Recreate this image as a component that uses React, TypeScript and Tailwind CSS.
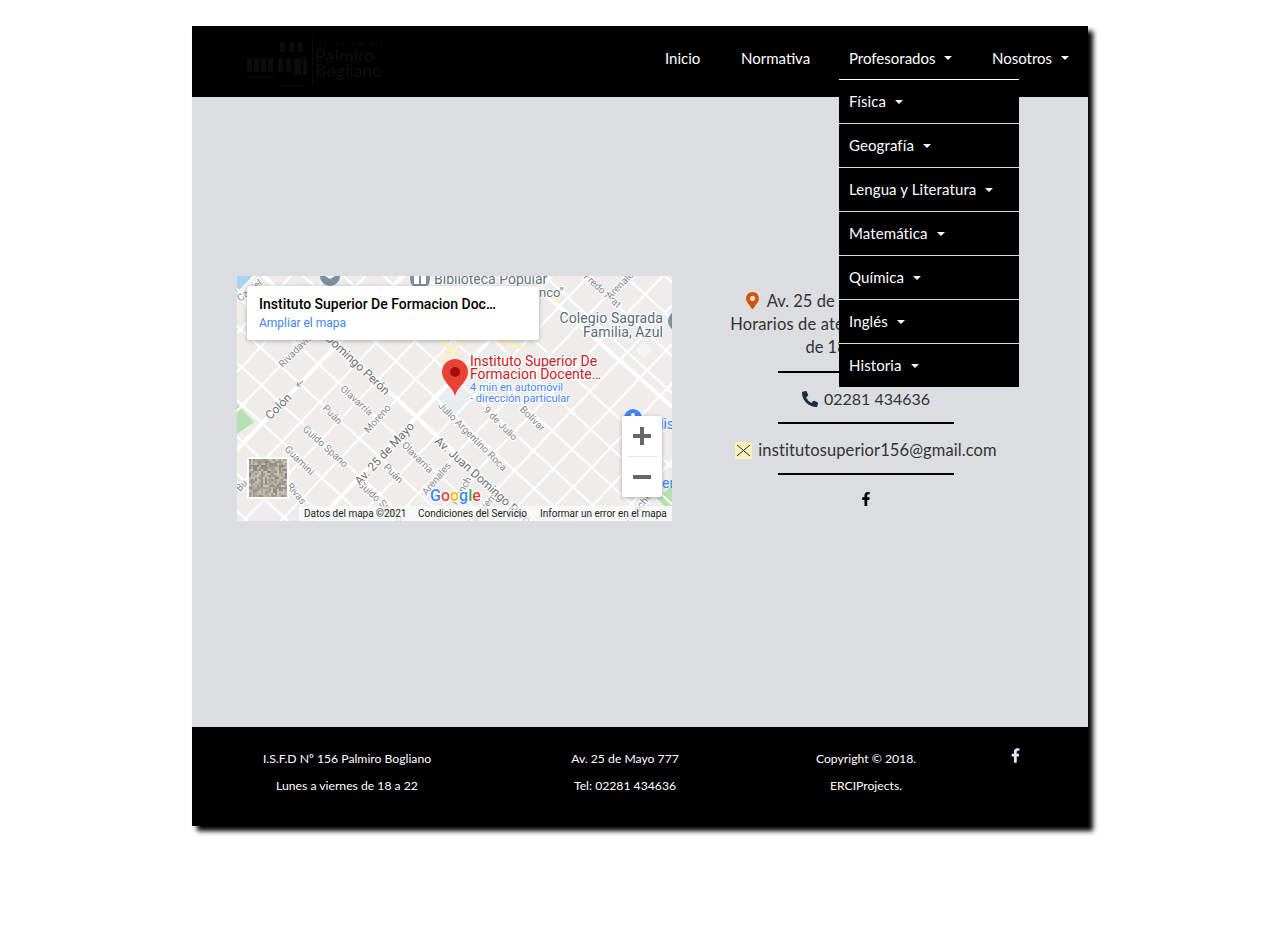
import { FaFacebookF, FaMapMarkerAlt, FaPhoneAlt } from 'react-icons/fa';

const professorados = ['Física', 'Geografía', 'Lengua y Literatura', 'Matemática', 'Química', 'Inglés', 'Historia'];

// street families of the map: y = 0.92x + c and y = -1.05x + d
const downRight = [-468, -431, -394, -357, -320, -283, -209, -172, -135, -98, -61, 13, 50, 87, 124, 161, 198, 235];
const upRight = [18, 57, 96, 135, 213, 252, 291, 369, 408, 447, 486, 525, 564, 603, 642];

const labels: [number, number, number, string, number][] = [
  [13, 15, -38, 'Catriel', 10],
  [59, 75, -45, 'Rivadavia', 10],
  [42, 131, -45, 'Colón', 12],
  [119, 125, 42, 'Olavarría', 10],
  [95, 139, 45, 'Puán', 10],
  [141, 143, -48, 'Moreno', 10],
  [88, 171, 42, 'Guido Spano', 10],
  [62, 185, 45, 'Guamini', 10],
  [59, 218, 50, 'Rivas', 10],
  [5, 210, -45, 'Bu', 10],
  [180, 182, 45, 'Olavarría', 10],
  [156, 198, 45, 'Puán', 10],
  [143, 226, 42, 'Guido Spano', 10],
  [200, 203, -50, 'Arenales', 10],
  [235, 161, 45, 'Julio Argentino Roca', 10],
  [263, 148, 45, '9 de Julio', 10],
  [295, 143, 45, 'Bolívar', 10],
  [225, 215, -60, 'French', 10],
  [247, 232, -50, 'Sarmiento', 10],
  [365, 15, 42, 'Fredo Prat', 10],
  [385, 8, -45, 'Arenales', 10],
  [402, 232, -50, 'Necochea', 10],
];

// speckle for the satellite thumbnail, same every render
const speckle = Array.from({ length: 19 * 19 }, (_, i) => {
  const n = Math.sin(i * 12.9898) * 43758.5453;
  const v = n - Math.floor(n);
  const g = Math.round(128 + v * 70);
  return { x: 12 + (i % 19) * 2, y: 183 + Math.floor(i / 19) * 2, fill: `rgb(${g + 6},${g + 2},${g - 10})` };
});

function Caret() {
  return <span className="ml-[9px] inline-block h-0 w-0 border-x-[4.5px] border-t-[4.5px] border-x-transparent border-t-white" />;
}

function Logo() {
  return (
    <svg width="140" height="60" viewBox="0 0 140 60" className="mt-[6px] font-['Lato',sans-serif]">
      <g fill="#0c0c0c">
        <rect x="2" y="26" width="5" height="14" />
        <rect x="9" y="26" width="5" height="14" />
        <rect x="16" y="26" width="5" height="14" />
        <rect x="23" y="26" width="5" height="14" />
        <rect x="2" y="44" width="28" height="1" />
        <rect x="35" y="10" width="5" height="10" />
        <rect x="44" y="10" width="5" height="10" />
        <rect x="53" y="10" width="5" height="10" />
        <rect x="33" y="26" width="5" height="14" />
        <rect x="41" y="26" width="5" height="14" />
        <rect x="49" y="26" width="7" height="17" />
        <rect x="58" y="26" width="4" height="17" />
        <rect x="37" y="53" width="23" height="1" />
        <rect x="67" y="5" width="1" height="47" />
      </g>
      <g fill="#0f0f0f">
        <text x="70" y="14" fontSize="6.5" letterSpacing="0.8">INSTITUTO Nº 156</text>
        <text x="70" y="30" fontSize="18">Palmiro</text>
        <text x="70" y="45" fontSize="17.5">Bogliano</text>
      </g>
    </svg>
  );
}

function MapLabel({ x, y, r, text, size }: { x: number; y: number; r: number; text: string; size: number }) {
  return (
    <text
      x={x}
      y={y}
      transform={`rotate(${r} ${x} ${y})`}
      textAnchor="middle"
      dominantBaseline="middle"
      fontSize={size}
      fill={size > 10 ? '#6b6f73' : '#85888c'}
      stroke="#ffffff"
      strokeWidth="2"
      paintOrder="stroke"
    >
      {text}
    </text>
  );
}

function MapDrawing() {
  return (
    <svg width="435" height="245" viewBox="0 0 435 245" className="block font-['Roboto',sans-serif]">
      <rect width="435" height="245" fill="#eeedec" />
      <path d="M0 0h16L0 17z" fill="#a9d3f5" />
      <path d="M0 128l17 18-17 12z" fill="#b5e0b0" />
      <path d="M420 222l15-12v20h-8z" fill="#b5e0b0" />
      <path d="M203 116l22-7 8 17-18 12-12-8z" fill="#e9ecf1" />
      <g stroke="#ffffff" strokeWidth="2">
        {downRight.map((c) => (
          <line key={c} x1="-5" y1={-5 * 0.92 + c} x2="440" y2={440 * 0.92 + c} />
        ))}
        {upRight.map((d) => (
          <line key={d} x1="-5" y1={5 * 1.05 + d} x2="440" y2={-440 * 1.05 + d} />
        ))}
      </g>
      <g stroke="#ffffff" strokeWidth="4">
        <line x1="-5" y1="-29" x2="440" y2="381" />
        <line x1="-5" y1="179" x2="200" y2="-36" />
        <line x1="-5" y1="335" x2="330" y2="-17" />
        <line x1="310" y1="20" x2="440" y2="135" />
        <line x1="-5" y1="15" x2="40" y2="55" />
      </g>
      <g stroke="#fcefc4" strokeWidth="4">
        <line x1="205" y1="65" x2="222" y2="80" />
        <line x1="262" y1="65" x2="288" y2="72" />
        <line x1="225" y1="65" x2="203" y2="85" />
        <line x1="305" y1="15" x2="322" y2="25" />
      </g>
      <rect x="401" y="68" width="12" height="12" rx="2" transform="rotate(45 407 74)" fill="#f5f5f5" />

      {labels.map(([x, y, r, text, size]) => (
        <MapLabel key={`${text}-${x}`} x={x} y={y} r={r} text={text} size={size} />
      ))}
      <text x="120" y="89" transform="rotate(43 120 89)" textAnchor="middle" dominantBaseline="middle" fontSize="12" fill="#6b6f73" stroke="#fff" strokeWidth="2" paintOrder="stroke">Domingo Perón</text>
      <text x="148" y="178" transform="rotate(-47 148 178)" textAnchor="middle" dominantBaseline="middle" fontSize="12" fill="#6b6f73" stroke="#fff" strokeWidth="2" paintOrder="stroke">Av. 25 de Mayo</text>
      <text x="197" y="166" transform="rotate(42 197 166)" fontSize="12" fill="#6b6f73" stroke="#fff" strokeWidth="2" paintOrder="stroke">Av. Juan Domingo Perón</text>
      <path d="M66 105l-6 5m0 0l1-4m-1 4l4 0" stroke="#a0a0a0" strokeWidth="1.2" fill="none" />

      <circle cx="93" cy="0" r="10" fill="#7b909e" />
      <path d="M88 0l5 3 5-3v-4H88z" fill="#fff" />
      <circle cx="183" cy="3" r="10" fill="#7b909e" />
      <path d="M177-3h5v11h-5zM184-3h5v11h-5z" fill="#fff" />
      <text x="197" y="8" fontSize="14" fill="#5f7382" stroke="#fff" strokeWidth="2" paintOrder="stroke">Biblioteca Popular</text>
      <text x="302" y="21" fontSize="13" fill="#5f7382" stroke="#fff" strokeWidth="2" paintOrder="stroke">nco"</text>
      <g fontSize="14" fill="#566b7a" textAnchor="end" stroke="#fff" strokeWidth="2" paintOrder="stroke">
        <text x="426" y="47" letterSpacing="0.1">Colegio Sagrada</text>
        <text x="426" y="61" letterSpacing="0.1">Familia, Azul</text>
      </g>
      <circle cx="441" cy="45" r="10" fill="#7b909e" />

      <circle cx="396" cy="142" r="9" fill="#4285f4" />
      <circle cx="396" cy="139" r="2" fill="#fff" />
      <text x="423" y="153" fontSize="14" fill="#4285f4">lis</text>
      <text x="425" y="212" fontSize="14" fill="#4285f4">er</text>

      <path d="M218 120c-2-9-13-14-13-24a13 13 0 0 1 26 0c0 10-11 15-13 24z" fill="#ea4335" />
      <circle cx="218" cy="96" r="5" fill="#a50e0e" />
      <g stroke="#fff" strokeWidth="2" paintOrder="stroke">
        <text x="233" y="90" fontSize="14" fill="#c5221f">Instituto Superior De</text>
        <text x="233" y="103" fontSize="14" fill="#c5221f">Formacion Docente…</text>
        <text x="233" y="115" fontSize="11" fill="#4285f4">4 min en automóvil</text>
        <text x="233" y="126" fontSize="11" fill="#4285f4">- dirección particular</text>
      </g>

      <text x="193" y="225" fontSize="16" fontWeight="500" stroke="#fff" strokeWidth="2" paintOrder="stroke">
        <tspan fill="#4285f4">G</tspan>
        <tspan fill="#ea4335">o</tspan>
        <tspan fill="#fbbc05">o</tspan>
        <tspan fill="#4285f4">g</tspan>
        <tspan fill="#34a853">l</tspan>
        <tspan fill="#ea4335">e</tspan>
      </text>

      <rect x="10" y="181" width="42" height="42" rx="2" fill="#ffffff" />
      {speckle.map((s) => (
        <rect key={`${s.x}-${s.y}`} x={s.x} y={s.y} width="2" height="2" fill={s.fill} />
      ))}
    </svg>
  );
}

function GoogleMap() {
  return (
    <div className="relative h-[245px] w-[435px] shrink-0 overflow-hidden font-['Roboto',sans-serif]">
      <MapDrawing />
      <div className="absolute left-[10px] top-[10px] flex h-[54px] w-[292px] flex-col rounded-[2px] bg-white pl-[12px] pt-[9px] shadow-[0_1px_4px_rgba(0,0,0,0.3)]">
        <span className="text-[14px] font-medium leading-[18px] text-black">Instituto Superior De Formacion Doc…</span>
        <span className="mt-[1px] text-[12px] leading-[18px] text-[#4285f4]">Ampliar el mapa</span>
      </div>
      <div className="absolute left-[385px] top-[140px] flex h-[81px] w-[40px] flex-col items-center rounded-[2px] bg-white shadow-[0_1px_4px_rgba(0,0,0,0.3)]">
        <div className="relative h-[40px] w-full">
          <span className="absolute left-[11px] top-[18px] h-[4px] w-[18px] bg-[#666666]" />
          <span className="absolute left-[18px] top-[11px] h-[18px] w-[4px] bg-[#666666]" />
        </div>
        <div className="h-px w-[30px] bg-[#e6e6e6]" />
        <div className="relative h-[40px] w-full">
          <span className="absolute left-[11px] top-[18px] h-[4px] w-[18px] bg-[#666666]" />
        </div>
      </div>
      <div className="absolute bottom-0 left-[62px] right-0 flex h-[15px] items-center whitespace-nowrap bg-white/60 text-[10px] leading-[15px] text-[#222222]">
        <span className="ml-[5px] w-[114px]">Datos del mapa ©2021</span>
        <span className="w-[122px]">Condiciones del Servicio</span>
        <span>Informar un error en el mapa</span>
      </div>
    </div>
  );
}

function Rule() {
  return <div className="mx-auto h-[2px] w-[176px] bg-black" />;
}

export default function App() {
  return (
    <div className="min-h-screen bg-white pt-[26px] font-['Lato',sans-serif]">
      <div className="mx-auto w-[896px] shadow-[5px_5px_5px_#000000]">
        <header className="flex h-[71px] items-start justify-between bg-black pl-[53px] pr-[10px]">
          <Logo />
          <nav className="mt-[10px] flex h-[44px] items-center gap-[20px] whitespace-nowrap text-[15px] text-white">
            <a className="w-[56px] px-[10px]">Inicio</a>
            <a className="w-[88px] px-[10px]">Normativa</a>
            <div className="relative flex h-[44px] w-[123px] items-center px-[10px]">
              Profesorados
              <Caret />
              <ul className="absolute left-0 top-[43px] z-10 w-[180px] border-t border-white bg-black tracking-[0.1px]">
                {professorados.map((name, i) => (
                  <li key={name} className={`flex items-center px-[10px] ${i < professorados.length - 1 ? 'h-[44px] border-b border-[#dddddd]' : 'h-[43px]'}`}>
                    {name}
                    <Caret />
                  </li>
                ))}
              </ul>
            </div>
            <a className="flex w-[96px] items-center px-[10px]">
              Nosotros
              <Caret />
            </a>
          </nav>
        </header>

        <main className="flex h-[630px] items-start bg-[#dbdde0] pl-[45px] pr-[28px] pt-[179px]">
          <GoogleMap />
          <div className="flex-1 whitespace-nowrap pt-[14px] text-center text-[16.5px] leading-[23px] text-[#333333]">
            <p>
              <FaMapMarkerAlt className="mr-[8px] inline-block h-[17px] w-[13px] -translate-y-[2px] text-[#d35400]" />
              Av. 25 de Mayo 777, Azul (BA)
            </p>
            <p className="tracking-[0.15px]">Horarios de atención: lunes a viernes</p>
            <p>de 18 a 22 horas</p>
            <div className="mt-[12px]">
              <Rule />
            </div>
            <p className="mt-[14px] flex items-center justify-center gap-[6px] text-[16px]">
              <FaPhoneAlt className="h-[16px] w-[16px] text-[#1f2a3a]" />
              02281 434636
            </p>
            <div className="mt-[12px]">
              <Rule />
            </div>
            <p className="mt-[15px] flex items-center justify-center gap-[6px] tracking-[0.1px]">
              <svg width="17" height="17" viewBox="0 0 17 17">
                <rect width="17" height="17" fill="#fbf2bd" />
                <path d="M2 3l13 11M15 3L2 14" stroke="#2b2b2b" strokeWidth="1" />
              </svg>
              institutosuperior156@gmail.com
            </p>
            <div className="mt-[11px]">
              <Rule />
            </div>
            <div className="mt-[17px] flex justify-center">
              <FaFacebookF className="h-[14px] w-[10px] text-black" />
            </div>
          </div>
        </main>

        <footer className="grid h-[99px] grid-cols-[310px_246px_236px_104px] bg-black pt-[18px] text-center text-[12.2px] leading-[27px] text-white">
          <div>
            <p>I.S.F.D Nº 156 Palmiro Bogliano</p>
            <p>Lunes a viernes de 18 a 22</p>
          </div>
          <div>
            <p>Av. 25 de Mayo 777</p>
            <p>Tel: 02281 434636</p>
          </div>
          <div>
            <p>Copyright © 2018.</p>
            <p>ERCIProjects.</p>
          </div>
          <div className="pl-[27px] pt-[3px]">
            <FaFacebookF className="h-[15px] w-[9px] text-[#dfe6f5]" />
          </div>
        </footer>
      </div>
    </div>
  );
}
